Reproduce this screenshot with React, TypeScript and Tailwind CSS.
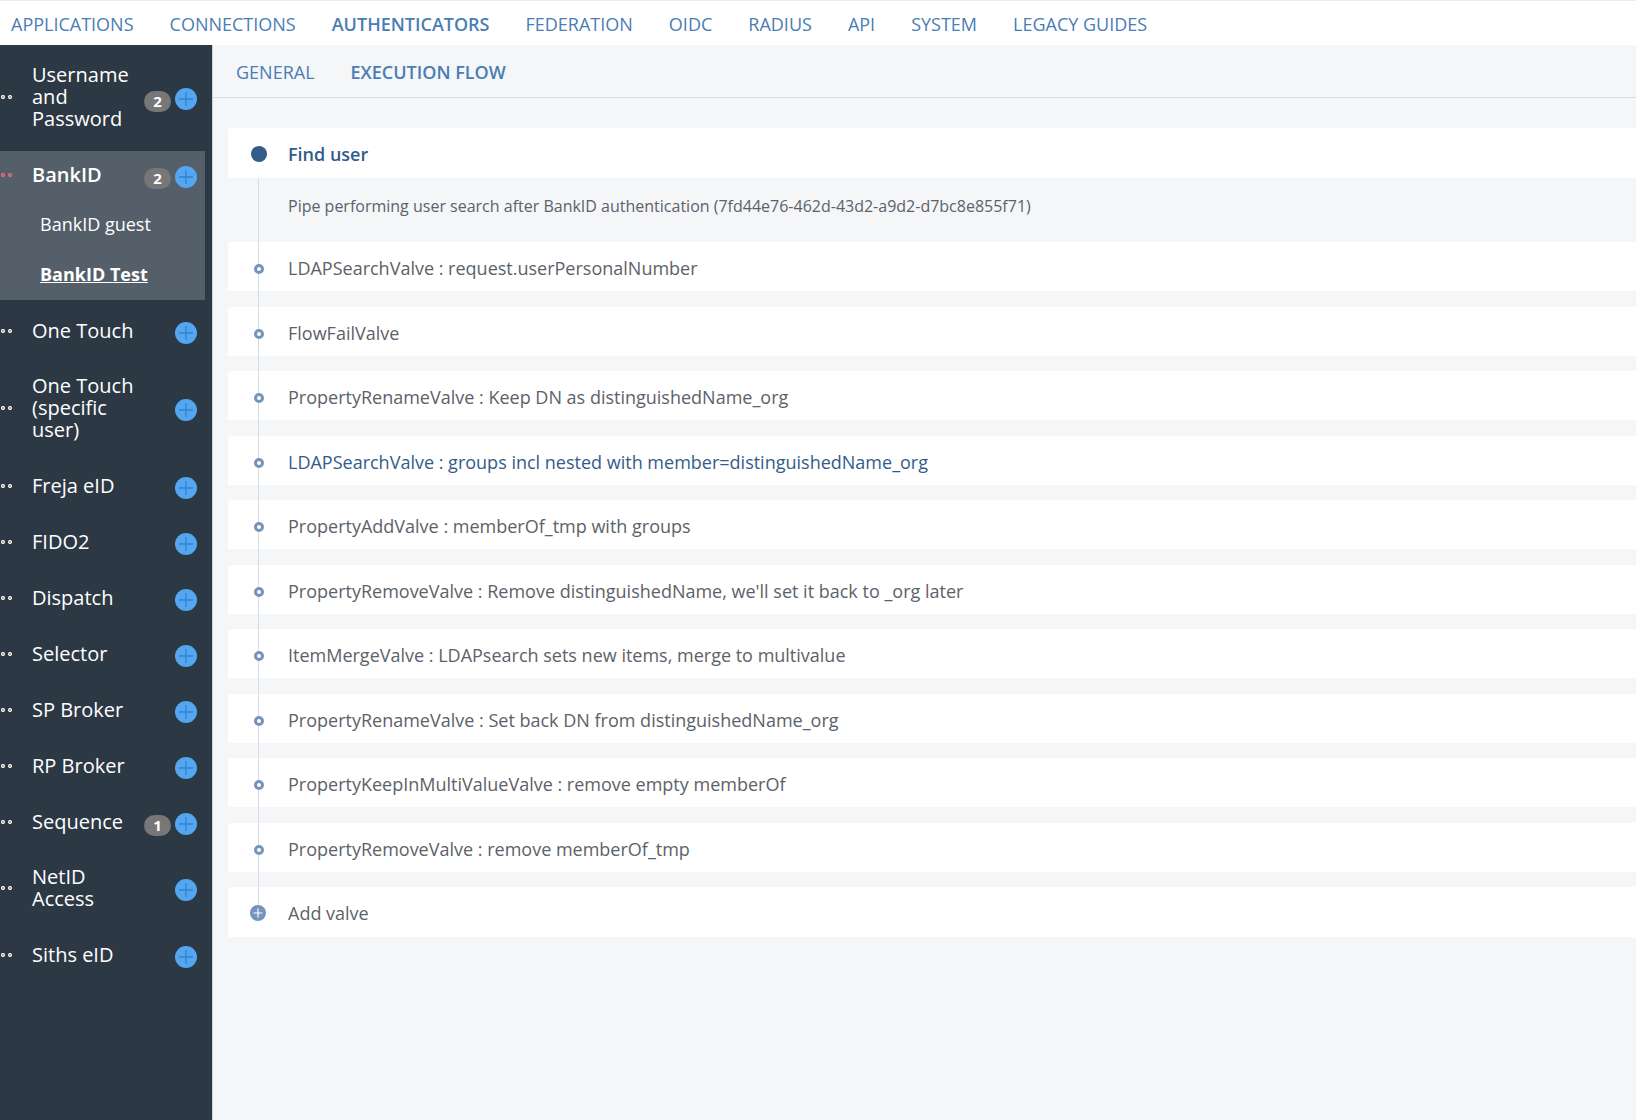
const topTabs = [
  'APPLICATIONS', 'CONNECTIONS', 'AUTHENTICATORS', 'FEDERATION', 'OIDC',
  'RADIUS', 'API', 'SYSTEM', 'LEGACY GUIDES',
]

interface Authenticator {
  name: string
  count?: number
  children?: string[]
}

const authenticators: Authenticator[] = [
  { name: 'Username and Password', count: 2 },
  { name: 'BankID', count: 2, children: ['BankID guest', 'BankID Test'] },
  { name: 'One Touch' },
  { name: 'One Touch (specific user)' },
  { name: 'Freja eID' },
  { name: 'FIDO2' },
  { name: 'Dispatch' },
  { name: 'Selector' },
  { name: 'SP Broker' },
  { name: 'RP Broker' },
  { name: 'Sequence', count: 1 },
  { name: 'NetID Access' },
  { name: 'Siths eID' },
]

const valves = [
  'LDAPSearchValve : request.userPersonalNumber',
  'FlowFailValve',
  'PropertyRenameValve : Keep DN as distinguishedName_org',
  'LDAPSearchValve : groups incl nested with member=distinguishedName_org',
  'PropertyAddValve : memberOf_tmp with groups',
  "PropertyRemoveValve : Remove distinguishedName, we'll set it back to _org later",
  'ItemMergeValve : LDAPsearch sets new items, merge to multivalue',
  'PropertyRenameValve : Set back DN from distinguishedName_org',
  'PropertyKeepInMultiValueValve : remove empty memberOf',
  'PropertyRemoveValve : remove memberOf_tmp',
]

const hoveredValve = 3

function Grip({ active }: { active: boolean }) {
  return (
    <svg
      viewBox="0 0 12 4"
      className={active ? 'w-3 h-1 shrink-0 text-[#f0706f]' : 'w-3 h-1 shrink-0 text-[#fff8ec]'}
      fill="none"
      stroke="currentColor"
      strokeWidth="1.3"
    >
      <circle cx="2" cy="2" r="1.4" />
      <circle cx="9" cy="2" r="1.4" />
    </svg>
  )
}

function AuthenticatorItem({ item }: { item: Authenticator }) {
  const active = !!item.children

  return (
    <li className={active ? 'bg-[#545f6a] mr-[7px]' : 'mr-[7px]'}>
      <div className="flex items-center min-h-[49px] pl-px pr-2 pt-3 pb-[14px]">
        <Grip active={active} />
        <a
          href="#"
          className={active
            ? 'ml-[19px] w-[104px] text-[20px] leading-[22px] font-semibold'
            : 'ml-[19px] w-[104px] text-[20px] leading-[22px]'}
        >
          {item.name}
        </a>
        {item.count && (
          <span className="mt-1 -mb-1 ml-auto mr-1 w-[27px] h-[21px] rounded-full bg-[#777] text-[15px] leading-[21px] font-bold text-center">
            {item.count}
          </span>
        )}
        <button
          aria-label={`Add ${item.name}`}
          className={item.count
            ? 'mt-0.5 -mb-0.5 size-[22px] shrink-0 rounded-full bg-[#54a6f0] text-[#3182d0]'
            : 'mt-0.5 -mb-0.5 ml-auto size-[22px] shrink-0 rounded-full bg-[#54a6f0] text-[#3182d0]'}
        >
          <svg viewBox="0 0 22 22" className="size-full" fill="none" stroke="currentColor" strokeWidth="1.3">
            <path d="M11 4v14M4 11h14" />
          </svg>
        </button>
      </div>
      {item.children && (
        <ul>
          {item.children.map((child, i) => (
            <li key={child} className="pl-10 pt-[13px] pb-[15px] text-[18px] leading-[22px]">
              <a href="#" className={i === 1 ? 'font-bold underline' : ''}>{child}</a>
            </li>
          ))}
        </ul>
      )}
    </li>
  )
}

export default function App() {
  return (
    <div className="min-h-screen flex flex-col bg-[#f4f6f8] font-['Open_Sans',sans-serif]">
      <nav className="flex gap-9 h-[45px] px-[11px] border-t border-[#eaeaea] bg-white text-[18px] leading-[46px] text-[#4a7db5]">
        {topTabs.map((tab) => (
          <a key={tab} href="#" className={tab === 'AUTHENTICATORS' ? 'font-semibold' : ''}>{tab}</a>
        ))}
      </nav>

      <div className="flex flex-1">
        <aside className="w-[213px] shrink-0 border-r border-[#cfd3d8] bg-[#2d3845] text-white">
          <ul className="pt-[7px] space-y-[7px]">
            {authenticators.map((item) => (
              <AuthenticatorItem key={item.name} item={item} />
            ))}
          </ul>
        </aside>

        <main className="flex-1 min-w-0">
          <nav className="flex gap-9 h-[53px] px-[23px] border-b border-[#d9dce0] text-[18px] leading-[54px] text-[#4a7db5]">
            <a href="#">GENERAL</a>
            <a href="#" className="font-semibold">EXECUTION FLOW</a>
          </nav>

          <section className="mt-[30px] ml-[15px] text-[18px] leading-[25px] text-[#5c6269]">
            <div className="flex items-center h-[50px] pt-0.5 rounded-tl bg-white">
              <span className="ml-[23px] size-4 rounded-full bg-[#335c89]" />
              <h2 className="ml-[21px] font-semibold text-[#335c89]">Find user</h2>
            </div>

            <div className="relative">
              {/* line that ties the valves together */}
              <div className="absolute left-[30px] top-0 bottom-6 w-px bg-[#d5dee8]" />

              <p className="h-16 pt-4 pl-[60px] text-[16px]">
                Pipe performing user search after BankID authentication (7fd44e76-462d-43d2-a9d2-d7bc8e855f71)
              </p>

              <ul>
                {valves.map((valve, i) => (
                  <li key={valve} className="flex items-center h-[49px] pt-1 mb-4 even:mb-[15px] rounded-tl bg-white">
                    <span className="relative ml-[26px] size-[10px] rounded-full border-3 border-[#7594bb] bg-white" />
                    <a href="#" className={i === hoveredValve ? 'ml-6 text-[#335c89]' : 'ml-6'}>{valve}</a>
                  </li>
                ))}
              </ul>

              <button className="flex items-center w-full h-[50px] pt-0.5 rounded-tl bg-white text-left">
                <svg viewBox="0 0 16 16" className="relative ml-[22px] size-4" fill="none">
                  <circle cx="8" cy="8" r="8" fill="#7594bb" />
                  <path d="M8 3.5v9M3.5 8h9" stroke="#fff" strokeWidth="1.2" />
                </svg>
                <span className="ml-[22px]">Add valve</span>
              </button>
            </div>
          </section>
        </main>
      </div>
    </div>
  )
}
